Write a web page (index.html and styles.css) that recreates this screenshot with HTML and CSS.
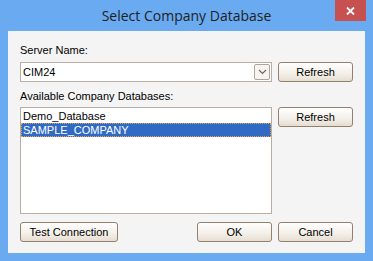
FILE: index.html
```html
<!DOCTYPE html>
<html lang="en">
<head>
<meta charset="UTF-8" />
  <meta name="viewport" content="width=device-width, initial-scale=1.0"/>
  <title>Select Company Database</title>
  <link rel="stylesheet" href="styles.css">
</head>
<body>
<div class="window">
  <div class="titlebar">
    <div></div>
    <div class="title">Select Company Database</div>
    <div class="close">
      <svg width="9" height="8" viewBox="0 0 9 8">
        <path d="M1 0.5 L8 7.5 M8 0.5 L1 7.5" stroke="#fff" stroke-width="1.8" fill="none"/>
      </svg>
    </div>
  </div>

  <div class="client">
    <div class="label">Server Name:</div>
    <div class="row">
      <div class="combo">
        <span class="combo-text">CIM24</span>
        <span class="drop">
          <svg width="9" height="6" viewBox="0 0 9 6">
            <path d="M1 1 L4.5 4.5 L8 1" stroke="#6f655b" stroke-width="1.2" fill="none"/>
          </svg>
        </span>
      </div>
      <button class="btn">Refresh</button>
    </div>

    <div class="label label-gap">Available Company Databases:</div>
    <div class="row">
      <div class="listbox">
        <div class="item">Demo_Database</div>
        <div class="item selected">SAMPLE_COMPANY</div>
      </div>
      <button class="btn">Refresh</button>
    </div>

    <div class="footer">
      <button class="btn btn-wide">Test Connection</button>
      <div class="spacer"></div>
      <button class="btn">OK</button>
      <button class="btn">Cancel</button>
    </div>
  </div>
</div>
</body>
</html>
```

FILE: styles.css
```css
* {
  box-sizing: border-box;
}
body {
  margin: 0;
  background: #6aaaf1;
}
.window {
  width: 373px;
  height: 261px;
  background: #6aaaf1;
  display: flex;
  flex-direction: column;
}
.titlebar {
  height: 31px;
  display: grid;
  grid-template-columns: 1fr auto 1fr;
  align-items: start;
}
.title {
  font-family: "Open Sans", "Noto Sans", sans-serif;
  font-size: 14px;
  line-height: 19px;
  padding-top: 6px;
  color: #1e1e1e;
}
.close {
  justify-self: end;
  width: 31px;
  height: 21px;
  margin-right: 7px;
  background: #c75050;
  display: flex;
  align-items: center;
  justify-content: center;
}
.client {
  margin: 0 8px 8px;
  flex: 1;
  background: #f4f4f4;
  padding: 13px 12px 11px;
  display: flex;
  flex-direction: column;
  font-family: Tahoma, "Liberation Sans", Arial, sans-serif;
  font-size: 11px;
  color: #000;
}
.label {
  line-height: 13px;
  margin-bottom: 5px;
}
.label-gap {
  margin-top: 8px;
  margin-bottom: 4px;
}
.row {
  display: flex;
  gap: 6px;
  align-items: flex-start;
}
.combo {
  flex: 1;
  height: 20px;
  border: 1px solid #b8aea5;
  background: #fff;
  display: flex;
  align-items: center;
  justify-content: space-between;
  padding: 1px 1px 1px 2px;
}
.drop {
  width: 16px;
  height: 16px;
  border: 1px solid #b0a598;
  border-radius: 2px;
  background: #f8f5f1;
  display: flex;
  align-items: center;
  justify-content: center;
}
.btn {
  width: 75px;
  height: 20px;
  padding: 0;
  border: 1px solid #93816f;
  border-radius: 3px;
  background: linear-gradient(#ffffff, #f3efe8 60%, #e6ddd0);
  font-family: Tahoma, "Liberation Sans", Arial, sans-serif;
  font-size: 11px;
  color: #000;
  line-height: 18px;
}
.btn-wide {
  width: 98px;
}
.listbox {
  flex: 1;
  height: 107px;
  border: 1px solid #b8aea5;
  background: #fff;
  padding-top: 1px;
}
.item {
  height: 14px;
  line-height: 14px;
  padding-left: 2px;
}
.selected {
  background: #316ac5;
  color: #fff;
  border: 1px dotted #e0a24a;
  line-height: 12px;
  padding-left: 1px;
}
.footer {
  margin-top: 8px;
  display: flex;
  gap: 6px;
}
.spacer {
  flex: 1;
}
```
